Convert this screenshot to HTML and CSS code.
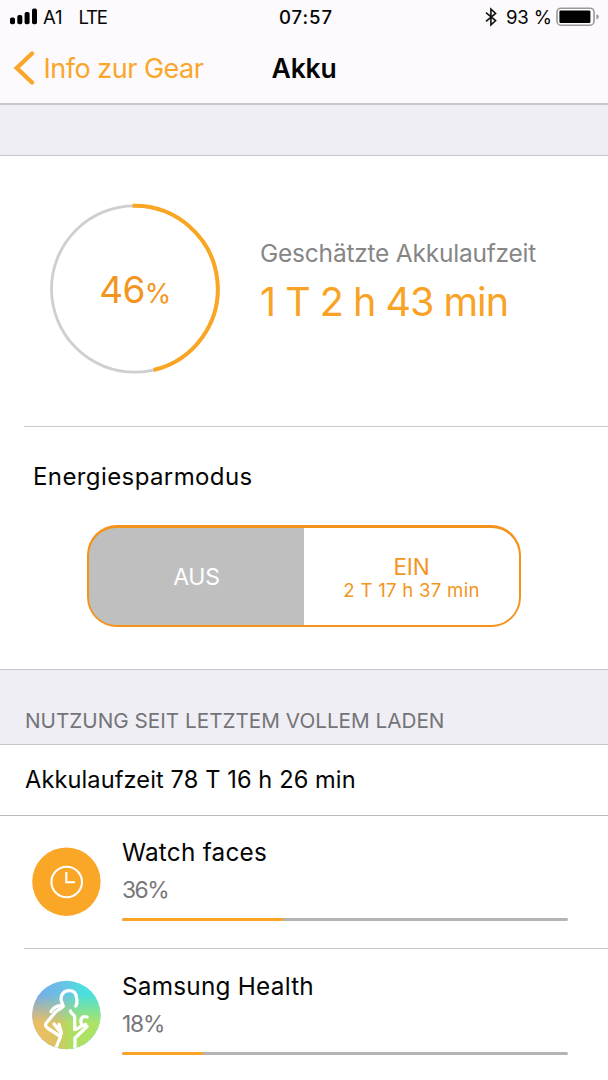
FILE: index.html
```html
<!DOCTYPE html>
<html lang="de">
<head>
<meta charset="utf-8">
<title>Akku</title>
<link rel="stylesheet" href="styles.css">
</head>
<body>
<header class="top">
  <div class="status">
    <div class="status-left">
      <svg class="signal" width="28" height="18" viewBox="0 0 28 18"><rect x="0" y="9.500" width="5" height="6.800" rx="1.800"/><rect x="7.300" y="7" width="5" height="9.300" rx="1.800"/><rect x="14.600" y="4" width="5" height="12.300" rx="1.800"/><rect x="22" y="0.600" width="5" height="15.700" rx="1.800"/></svg>
      <span class="carrier">A1</span>
      <span class="network">LTE</span>
    </div>
    <span class="clock">07:57</span>
    <div class="status-right">
      <svg class="bluetooth" width="12" height="20" viewBox="0 0 12 20"><path d="M1 5.600 10.600 13.600 5.900 18V2L10.600 6.400 1 14.400"/></svg>
      <span class="percent">93 %</span>
      <svg class="battery" width="44" height="20" viewBox="0 0 44 20"><rect class="shell" x="1" y="1.200" width="37" height="17" rx="4"/><rect x="3.400" y="3.600" width="31" height="12.400" rx="1.200"/><path class="cap" d="M40.400 7.200c1.700.4 2.400 1.400 2.400 2.600s-.7 2.200-2.400 2.600z"/></svg>
    </div>
  </div>
  <nav class="nav">
    <a class="back"><svg width="22" height="36" viewBox="0 0 22 36"><path d="M19 3.500 3.800 18 19 32.500"/></svg><span class="back-text">Info zur Gear</span></a>
    <h1 class="title">Akku</h1>
  </nav>
</header>
<div class="gap"></div>
<section class="estimate">
  <div class="ring">
    <svg class="ring-art" width="172" height="172" viewBox="0 0 172 172"><circle class="track" cx="85.700" cy="86" r="83.200"/><path class="arc" d="M83.500 2.800H85.700A83.200 83.200 0 0 1 104.600 167"/></svg>
    <div class="ring-text">46<span class="ring-unit">%</span></div>
  </div>
  <div class="estimate-info">
    <div class="estimate-label">Geschätzte Akkulaufzeit</div>
    <div class="estimate-value">1 T 2 h 43 min</div>
  </div>
</section>
<section class="saving">
  <h2 class="saving-title">Energiesparmodus</h2>
  <div class="switch">
    <div class="option off"><span class="off-text">AUS</span></div>
    <div class="option on"><span class="on-text">EIN</span><span class="on-time">2 T 17 h 37 min</span></div>
  </div>
</section>
<h3 class="section-head"><span class="head-text">NUTZUNG SEIT LETZTEM VOLLEM LADEN</span></h3>
<div class="runtime"><span class="runtime-text">Akkulaufzeit 78 T 16 h 26 min</span></div>
<ul class="apps">
  <li class="app">
    <svg class="app-icon" width="70" height="70" viewBox="0 0 70 70"><circle cx="35.400" cy="34.700" r="34.200" fill="#faa728"/><g fill="none" stroke="#fff" stroke-width="2.100"><circle cx="35.700" cy="35" r="15.300"/><path d="M35.300 25V35.300H44"/></g></svg>
    <div class="app-body">
      <div class="app-name">Watch faces</div>
      <div class="app-share wide">36%</div>
      <div class="bar"><div class="fill" style="width:36%"></div></div>
    </div>
  </li>
  <li class="app">
    <svg class="app-icon" width="70" height="70" viewBox="0 0 70 70">
      <defs>
        <linearGradient id="sky" x1="0" y1="0" x2="1" y2="0"><stop offset=".1" stop-color="#72ade9"/><stop offset=".48" stop-color="#68c4e5"/><stop offset=".75" stop-color="#49e1dd"/></linearGradient>
        <linearGradient id="ground" x1="0" y1="0" x2="1" y2="0"><stop offset=".08" stop-color="#efbd60"/><stop offset=".36" stop-color="#dac365"/><stop offset=".58" stop-color="#ade060"/><stop offset="1" stop-color="#aee366"/></linearGradient>
        <linearGradient id="fade" x1="0" y1="0" x2="0" y2="1"><stop offset=".2" stop-color="#000"/><stop offset=".62" stop-color="#fff"/></linearGradient>
        <mask id="lower"><rect width="70" height="70" fill="url(#fade)"/></mask>
        <clipPath id="disc"><circle cx="35.400" cy="35" r="34.200"/></clipPath>
      </defs>
      <g clip-path="url(#disc)">
        <rect width="70" height="70" fill="url(#sky)"/>
        <rect width="70" height="70" fill="url(#ground)" mask="url(#lower)"/>
        <g fill="none" stroke="#fff" stroke-width="3.300" stroke-linecap="round" stroke-linejoin="round">
          <path d="M44.700 26C46.500 24 46 20 45.500 17.500C45 12.500 42 10.700 38 10.700C33 10.700 29.800 14.500 30 19C30.200 22 32 24 32 26.500C28 24.500 22.500 27 20 31.500"/>
          <path d="M32 26.500C30.500 29 26.500 29.500 24.500 32L15.300 43C13.900 45 14.500 46.500 16.500 48L29.500 56.500 24.500 69"/>
          <path d="M23 44 30.500 53.500 28 44.500"/>
          <path d="M39.500 31C39.500 34 43.500 34 43.700 37V49.500C47.500 49.500 49 46.500 51 45.700L54.500 44.500M44 69V58L56 46.500"/>
          <path d="M50.700 44.500C48.500 39.500 51 35.300 56 37"/>
        </g>
      </g>
    </svg>
    <div class="app-body">
      <div class="app-name">Samsung Health</div>
      <div class="app-share">18%</div>
      <div class="bar"><div class="fill" style="width:18.2%"></div></div>
    </div>
  </li>
</ul>
</body>
</html>
```
FILE: styles.css
```css
* { box-sizing: border-box; margin: 0; padding: 0; }
body { width: 608px; height: 1080px; overflow: hidden; background: #fff; color: #050505; font-family: Inter, "Liberation Sans", sans-serif; white-space: nowrap; }
svg { display: block; flex: none; }
h1, h2, h3 { font-weight: 400; }

.top { height: 105px; background: #fcfafc; border-bottom: 2px solid #c8c7cb; }
.status { display: grid; grid-template-columns: 1fr auto 1fr; align-items: center; height: 34px; padding: 0 8px 0 10px; font-size: 18.6px; line-height: 34px; }
.status-left, .status-right { display: flex; align-items: center; }
.status-right { justify-content: flex-end; }
.carrier { margin-left: 5px; letter-spacing: -0.2px; }
.network { margin-left: 16px; letter-spacing: -1.2px; }
.clock { margin-left: 2px; font-weight: 500; letter-spacing: 0.9px; }
.bluetooth { fill: none; stroke: #111; stroke-width: 1.6; }
.percent { margin: 0 4px 0 9px; letter-spacing: -0.1px; }
.shell { fill: #fff; stroke: #999; stroke-width: 1.6; }
.cap { fill: #999; }
.nav { display: grid; grid-template-columns: 1fr auto 1fr; align-items: center; height: 68px; padding: 0 13px; }
.back { display: flex; align-items: center; color: #f9a62a; }
.back path { fill: none; stroke: #f9a62a; stroke-width: 4.4; stroke-linecap: round; }
.back-text { margin-left: 8.6px; font-size: 27px; letter-spacing: -0.5px; }
.title { font-size: 26.5px; font-weight: 600; letter-spacing: -0.2px; }

.gap { height: 51px; background: #efeef4; border-bottom: 1px solid #c8c7cc; }
.estimate { display: flex; height: 270px; padding: 47px 0 0 49px; }
.ring { display: grid; width: 172px; height: 172px; }
.ring > * { grid-area: 1 / 1; }
.track { fill: none; stroke: #cfcfcf; stroke-width: 2.8; }
.arc { fill: none; stroke: #f8a624; stroke-width: 4; }
.ring-text { align-self: center; justify-self: center; padding-top: 5px; color: #f3961f; font-size: 37px; line-height: 44px; letter-spacing: -0.6px; }
.ring-unit { font-size: 27px; }
.estimate-info { padding: 31px 0 0 39px; }
.estimate-label { color: #868686; font-size: 24.5px; line-height: 38px; letter-spacing: -0.22px; }
.estimate-value { color: #f8a326; font-size: 39.5px; line-height: 60px; letter-spacing: -1px; }

.saving { height: 243px; margin-left: 24px; padding: 31px 0 0 9px; border-top: 1px solid #c8c7cc; }
.saving-title { font-size: 24px; line-height: 38px; letter-spacing: 0.4px; }
.switch { display: flex; width: 434px; height: 102px; margin: 29px 0 0 54px; padding: 2.5px 2px; background: #f3931b; border-radius: 30px; }
.option { display: flex; flex: 1; flex-direction: column; align-items: center; justify-content: center; padding-top: 2px; }
.off { background: #bfbfbf; border-radius: 27.5px 0 0 27.5px; color: #fff; font-size: 23px; letter-spacing: -0.2px; }
.on { background: #fff; border-radius: 0 27.5px 27.5px 0; color: #f3951e; }
.on-text { font-size: 22.5px; line-height: 25px; letter-spacing: -0.2px; }
.on-time { font-size: 18.6px; line-height: 22px; letter-spacing: 0.27px; }

.section-head { height: 76px; padding-left: 25px; background: #efeef4; border: solid #c8c7cc; border-width: 1px 0; color: #747478; font-size: 20.7px; line-height: 101px; }
.runtime { height: 71px; padding-left: 25px; border-bottom: 1px solid #b9b9bb; font-size: 23.6px; line-height: 69px; letter-spacing: 0.1px; }

.apps { list-style: none; }
.app { display: flex; height: 133px; margin-left: 24px; padding: 31px 40px 0 7px; border-bottom: 1px solid #c8c7cc; }
.app-body { flex: 1; margin: -14px 0 0 21px; }
.app + .app .app-body { margin-top: -13px; }
.app-name { font-size: 24.3px; line-height: 39px; letter-spacing: 0.25px; }
.app-share { color: #77777a; font-size: 22.8px; line-height: 36px; letter-spacing: -1.2px; }
.app-share.wide { letter-spacing: -1.5px; }
.bar { height: 3px; margin-top: 10px; background: #b4b4b4; border-radius: 2px; overflow: hidden; }
.fill { height: 100%; background: #f9a425; }
```
